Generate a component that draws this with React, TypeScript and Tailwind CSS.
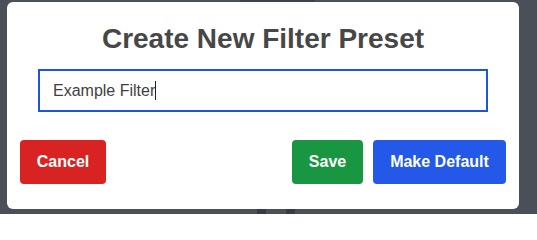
import React from "react";

export default function App() {
  return (
    <div
      className="relative w-[537px] h-[214px] overflow-hidden bg-[#4b4f57] pt-[2px] pl-[7px]"
      style={{ fontFamily: '"Liberation Sans", Arial, sans-serif' }}
    >
      {/* background page bits peeking around the modal */}
      <div className="absolute left-[240px] top-0 w-[75px] h-[2px] bg-[#3d4350]" />
      <div className="absolute left-[257px] top-[209px] w-[9px] h-[5px] bg-[#363b4c]" />
      <div className="absolute left-[286px] top-[209px] w-[9px] h-[5px] bg-[#363b4c]" />

      <div className="relative w-[512px] h-[207px] bg-white rounded-[6px] px-[13px] pt-[21px] pb-[25px] flex flex-col">
        <h1 className="text-center text-[28px] leading-[32px] font-bold text-[#474747]">
          Create New Filter Preset
        </h1>
        <div className="mx-[18px] mt-[14px] h-[43px] border-2 border-[#1d55e0] flex items-center px-[13px] text-[16px] text-[#3f3f3f]">
          <span>Example Filter</span>
          <span className="inline-block w-[1px] h-[19px] bg-[#222]" />
        </div>
        <div className="mt-[28px] flex justify-between">
          <button className="w-[86px] h-[44px] rounded-[4px] bg-[#d92323] text-white text-[16px] font-bold">
            Cancel
          </button>
          <div className="flex gap-[10px]">
            <button className="w-[71px] h-[44px] rounded-[4px] bg-[#189642] text-white text-[16px] font-bold">
              Save
            </button>
            <button className="w-[133px] h-[44px] rounded-[4px] bg-[#2358e8] text-white text-[16px] font-bold">
              Make Default
            </button>
          </div>
        </div>
      </div>
    </div>
  );
}
